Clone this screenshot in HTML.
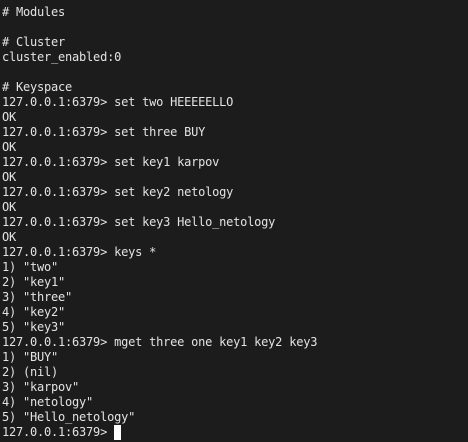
<!DOCTYPE html>
<html><head><style>
html,body{margin:0;padding:0;background:#1c1c1c;width:468px;height:442px;overflow:hidden}
pre{margin:0;padding:5px 0 0 2px;font-family:"DejaVu Sans Mono","Liberation Mono",monospace;font-size:12px;letter-spacing:-0.22px;line-height:15px;color:#e3e3e3}
.c{display:inline-block;width:7px;height:15px;background:#fff;vertical-align:top}
</style></head><body><pre># Modules

# Cluster
cluster_enabled:0

# Keyspace
127.0.0.1:6379&gt; set two HEEEEELLO
OK
127.0.0.1:6379&gt; set three BUY
OK
127.0.0.1:6379&gt; set key1 karpov
OK
127.0.0.1:6379&gt; set key2 netology
OK
127.0.0.1:6379&gt; set key3 Hello_netology
OK
127.0.0.1:6379&gt; keys *
1) "two"
2) "key1"
3) "three"
4) "key2"
5) "key3"
127.0.0.1:6379&gt; mget three one key1 key2 key3
1) "BUY"
2) (nil)
3) "karpov"
4) "netology"
5) "Hello_netology"
127.0.0.1:6379&gt; <span class="c"></span></pre></body></html>
